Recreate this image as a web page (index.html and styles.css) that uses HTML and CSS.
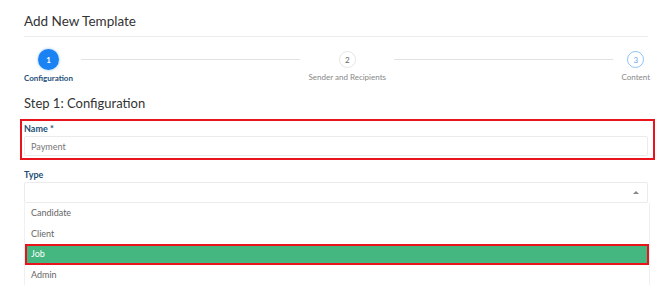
FILE: index.html
```html
<!DOCTYPE html>
<html lang="en">
<head>
    <meta charset="UTF-8">
    <meta name="viewport" content="width=device-width, initial-scale=1.0">
    <title>Add New Template</title>
    <link rel="stylesheet" href="styles.css">
</head>
<body>
    <div class="container">
        <h1 class="page-title">Add New Template</h1>

        <div class="stepper">
            <div class="step active">
                <span class="step-num">1</span>
                <span class="step-label">Configuration</span>
            </div>
            <div class="step-line"></div>
            <div class="step">
                <span class="step-num">2</span>
                <span class="step-label">Sender and Recipients</span>
            </div>
            <div class="step-line"></div>
            <div class="step next">
                <span class="step-num">3</span>
                <span class="step-label">Content</span>
            </div>
        </div>

        <h2 class="step-title">Step 1: Configuration</h2>

        <div class="field marked">
            <label class="field-label">Name *</label>
            <div class="input">Payment</div>
        </div>

        <div class="field">
            <label class="field-label">Type</label>
            <div class="input select"><span class="caret"></span></div>
            <ul class="options">
                <li>Candidate</li>
                <li>Client</li>
                <li class="selected">Job</li>
                <li>Admin</li>
            </ul>
        </div>
    </div>
</body>
</html>
```

FILE: styles.css
```css
body {
    font-family: 'Lato', 'Open Sans', sans-serif;
    margin: 0;
    background: #fff;
    color: #444;
    overflow: hidden;
}
.container {
    padding: 0 22px 0 24px;
}
.page-title {
    font-size: 13.5px;
    line-height: 18px;
    font-weight: normal;
    color: #333;
    margin: 0;
    padding: 12px 0 6px;
    border-bottom: 1px solid #ececec;
}
.stepper {
    display: flex;
    align-items: flex-start;
    gap: 8px;
    padding-top: 12px;
    margin-right: -2px;
}
.step {
    display: flex;
    flex-direction: column;
    align-items: center;
    gap: 3px;
}
.step-num {
    width: 15px;
    height: 15px;
    border-radius: 50%;
    border: 1px solid #e6e6e6;
    display: flex;
    align-items: center;
    justify-content: center;
    font-size: 8px;
    color: #666;
    margin: 2px 0 1px;
}
.step.active .step-num {
    width: 21px;
    height: 21px;
    margin: 0;
    border: none;
    background: #1a82f2;
    color: #fff;
    font-weight: bold;
    box-shadow: 0 0 3px rgba(26,130,242,0.5);
}
.step.next .step-num {
    border-color: #8cc3f5;
    color: #6aa8e8;
}
.step-label {
    font-size: 8px;
    line-height: 10px;
    color: #888;
    white-space: nowrap;
}
.step.active .step-label {
    color: #1f4f7a;
    font-weight: bold;
}
.step-line {
    flex: 1;
    height: 1px;
    background: #e2e2e2;
    margin-top: 10px;
}
.step-title {
    font-size: 13px;
    line-height: 16px;
    font-weight: normal;
    color: #333;
    margin: 12px 0 8px;
}
.field {
    margin-bottom: 7px;
}
.field.marked {
    border: 2px solid #e8131b;
    margin: 0 -7px 7px -4px;
    padding: 0 5px 2px 2px;
}
.field-label {
    display: block;
    font-size: 9px;
    line-height: 11px;
    font-weight: bold;
    color: #234f74;
    padding: 2px 0;
}
.input {
    height: 18px;
    border: 1px solid #ebebeb;
    border-radius: 2px;
    font-size: 9px;
    color: #777;
    padding-left: 6px;
    display: flex;
    align-items: center;
}
.select {
    height: 19px;
    justify-content: flex-end;
    padding-right: 8px;
}
.caret {
    width: 0;
    height: 0;
    border-left: 3px solid transparent;
    border-right: 3px solid transparent;
    border-bottom: 3px solid #888;
}
.options {
    list-style: none;
    margin: 0 -2px 0 0;
    padding: 0;
    border-left: 1px solid #f0f0f0;
    border-right: 1px solid #f0f0f0;
}
.options li {
    height: 20.5px;
    line-height: 20.5px;
    font-size: 9px;
    color: #666;
    padding-left: 6px;
}
.options li.selected {
    background: #44b680;
    color: #fff;
    outline: 2px solid #e8131b;
    outline-offset: -2px;
}
```
